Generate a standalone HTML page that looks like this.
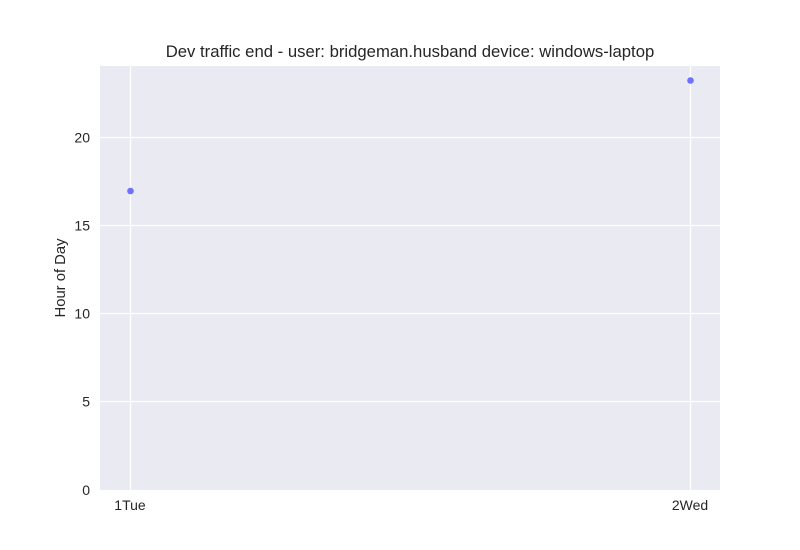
<!DOCTYPE html>
<html><head><style>html,body{margin:0;padding:0;background:#fff;}svg{display:block}</style></head>
<body>
<svg width="800" height="550" xmlns="http://www.w3.org/2000/svg" font-family="Liberation Sans, DejaVu Sans, sans-serif">
<rect x="0" y="0" width="800" height="550" fill="#fff"/>
<rect x="100" y="66" width="620" height="424" fill="#eaeaf2"/>
<g stroke="#fff" stroke-width="1.2">
<line x1="100" x2="720" y1="401.5" y2="401.5"/>
<line x1="100" x2="720" y1="313.5" y2="313.5"/>
<line x1="100" x2="720" y1="225.5" y2="225.5"/>
<line x1="100" x2="720" y1="137.5" y2="137.5"/>
<line x1="130.5" x2="130.5" y1="66" y2="490"/>
<line x1="690.5" x2="690.5" y1="66" y2="490"/>
</g>
<circle cx="130.5" cy="191" r="3.3" fill="#7070ff"/>
<circle cx="690.5" cy="80.5" r="3.3" fill="#7070ff"/>
<g font-size="14" fill="#262626" text-anchor="end">
<text x="90" y="495">0</text>
<text x="90" y="406.5">5</text>
<text x="90" y="318.5">10</text>
<text x="90" y="230.5">15</text>
<text x="90" y="142.5">20</text>
</g>
<g font-size="14" fill="#262626" text-anchor="middle">
<text x="130" y="510">1Tue</text>
<text x="690" y="510">2Wed</text>
</g>
<text transform="translate(65,278) rotate(-90)" font-size="14.8" fill="#262626" text-anchor="middle">Hour of Day</text>
<text x="410" y="57" font-size="16.7" fill="#262626" text-anchor="middle">Dev traffic end - user: bridgeman.husband device: windows-laptop</text>
</svg>
</body></html>
